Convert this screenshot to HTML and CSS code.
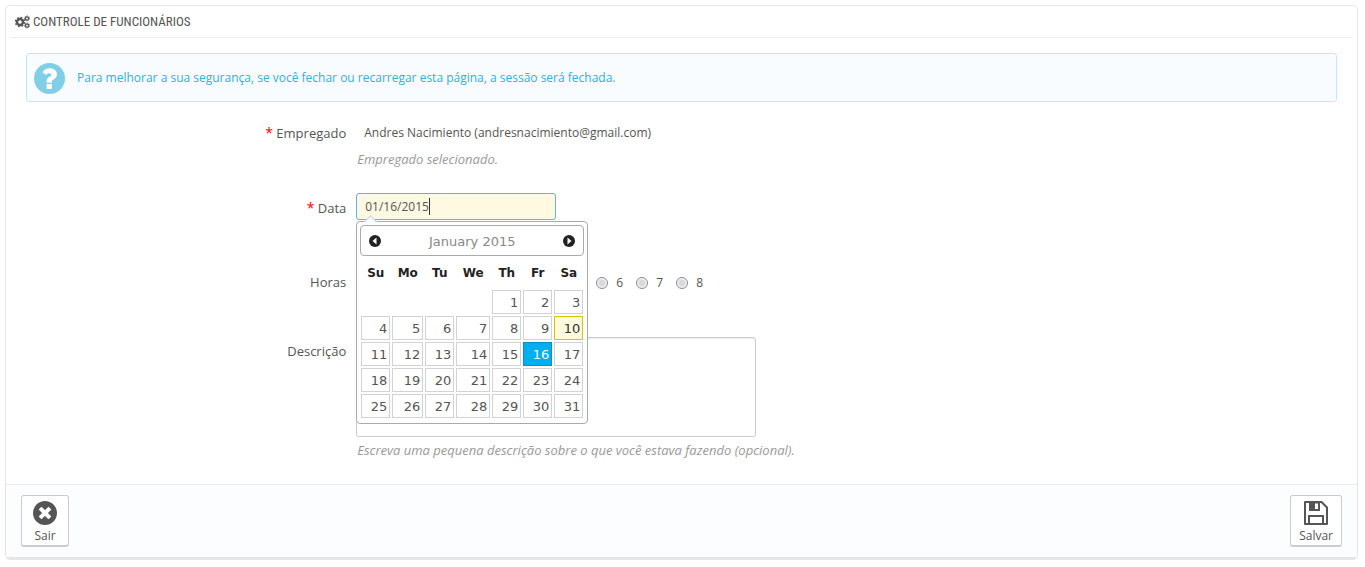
FILE: index.html
```html
<!DOCTYPE html>
<html lang="pt-BR">
<head>
<meta charset="utf-8">
<title>Controle de funcionários</title>
<link rel="stylesheet" href="styles.css">
</head>
<body>
<form class="panel">
  <h1 class="panel-heading">
    <svg class="cogs" viewBox="0 0 15 14" aria-hidden="true">
      <g fill="none" stroke="#555">
        <circle cx="5" cy="7" r="3" stroke-width="2.4"/>
        <circle cx="5" cy="7" r="4.6" stroke-width="1.4" stroke-dasharray="1.8 1.813"/>
        <circle cx="12" cy="3.4" r="1.6" stroke-width="1.3"/>
        <circle cx="12" cy="3.4" r="2.5" stroke-width="1" stroke-dasharray="1.1 1.144"/>
        <circle cx="12" cy="10.6" r="1.6" stroke-width="1.3"/>
        <circle cx="12" cy="10.6" r="2.5" stroke-width="1" stroke-dasharray="1.1 1.144"/>
      </g>
    </svg>
    <span>CONTROLE DE FUNCIONÁRIOS</span>
  </h1>

  <div class="alert">
    <svg class="alert-icon" viewBox="0 0 32 32" aria-hidden="true">
      <circle cx="16" cy="16" r="16" fill="#81cfe6"/>
      <path fill="#fff" d="M13 20.500h5.500v-1.200c0-1 .5-1.500 1.700-2.300 1.900-1.200 3.500-2.600 3.500-5.200 0-4-3.500-6.300-7.500-6.300-3.400 0-5.600 1.300-7.400 4l3.700 2.900c1-1.300 1.900-1.900 3.200-1.900 1.200 0 2.200.6 2.200 1.600 0 1-.8 1.500-2 2.200-1.600 1-2.900 2.300-2.900 4.600zM13 21.800h5.500v5H13z"/>
    </svg>
    <span>Para melhorar a sua segurança, se você fechar ou recarregar esta página, a sessão será fechada.</span>
  </div>

  <div class="form-body">
    <div class="row row-employee">
      <span class="label"><span class="required">*</span> Empregado</span>
      <div class="field">
        <p class="static">Andres Nacimiento (andresnacimiento@gmail.com)</p>
        <p class="help">Empregado selecionado.</p>
      </div>
    </div>

    <div class="row row-date">
      <label class="label" for="date"><span class="required">*</span> Data</label>
      <div class="field">
        <div class="date-box">
          <input class="date-input" id="date" type="text" value="01/16/2015">
        </div>
        <div class="datepicker">
          <div class="picker-header">
            <button class="picker-nav" type="button" aria-label="Prev">
              <svg viewBox="0 0 12 12"><circle cx="6" cy="6" r="6" fill="#222"/><path d="M7.500 2.500v7L3.500 6z" fill="#fff"/></svg>
            </button>
            <span>January 2015</span>
            <button class="picker-nav" type="button" aria-label="Next">
              <svg viewBox="0 0 12 12"><circle cx="6" cy="6" r="6" fill="#222"/><path d="M4.500 2.500v7L8.500 6z" fill="#fff"/></svg>
            </button>
          </div>
          <table class="calendar">
            <colgroup><col class="day-col"><col class="mon-col"><col class="day-col"><col class="wed-col"><col class="day-col"><col class="day-col"><col class="day-col"></colgroup>
            <thead>
              <tr><th>Su</th><th>Mo</th><th>Tu</th><th>We</th><th>Th</th><th>Fr</th><th>Sa</th></tr>
            </thead>
            <tbody>
              <tr><td></td><td></td><td></td><td></td><td><a href="#">1</a></td><td><a href="#">2</a></td><td><a href="#">3</a></td></tr>
              <tr><td><a href="#">4</a></td><td><a href="#">5</a></td><td><a href="#">6</a></td><td><a href="#">7</a></td><td><a href="#">8</a></td><td><a href="#">9</a></td><td><a class="today" href="#">10</a></td></tr>
              <tr><td><a href="#">11</a></td><td><a href="#">12</a></td><td><a href="#">13</a></td><td><a href="#">14</a></td><td><a href="#">15</a></td><td><a class="selected" href="#">16</a></td><td><a href="#">17</a></td></tr>
              <tr><td><a href="#">18</a></td><td><a href="#">19</a></td><td><a href="#">20</a></td><td><a href="#">21</a></td><td><a href="#">22</a></td><td><a href="#">23</a></td><td><a href="#">24</a></td></tr>
              <tr><td><a href="#">25</a></td><td><a href="#">26</a></td><td><a href="#">27</a></td><td><a href="#">28</a></td><td><a href="#">29</a></td><td><a href="#">30</a></td><td><a href="#">31</a></td></tr>
            </tbody>
          </table>
        </div>
      </div>
    </div>

    <div class="row row-hours">
      <span class="label" id="hours-label">Horas</span>
      <div class="field hours" role="radiogroup" aria-labelledby="hours-label">
        <label class="hour"><input type="radio" name="hours">6</label>
        <label class="hour"><input type="radio" name="hours">7</label>
        <label class="hour"><input type="radio" name="hours">8</label>
      </div>
    </div>

    <div class="row row-description">
      <label class="label" for="description">Descrição</label>
      <div class="field">
        <textarea class="description" id="description"></textarea>
        <p class="help">Escreva uma pequena descrição sobre o que você estava fazendo (opcional).</p>
      </div>
    </div>
  </div>

  <div class="panel-footer">
    <button class="action" type="button">
      <svg viewBox="0 0 24 24" aria-hidden="true"><circle cx="12" cy="12" r="12" fill="#555"/><path d="M8.500 8.500l7 7M15.500 8.500l-7 7" stroke="#fff" stroke-width="4"  stroke-linecap="square"/></svg>
      <span>Sair</span>
    </button>
    <button class="action" type="submit">
      <svg viewBox="0 0 24 24" aria-hidden="true"><path d="M1 1h16.500L23 6.500V23H1z" fill="none" stroke="#555" stroke-width="2" stroke-linejoin="round"/><path d="M5 1h11v9H5zM11 2.500v5.500h3v-5.500z" fill="#555" fill-rule="evenodd"/><path d="M5 23v-8h14v8" fill="none" stroke="#555" stroke-width="2"/></svg>
      <span>Salvar</span>
    </button>
  </div>
</form>
</body>
</html>
```
FILE: styles.css
```css
* {
  box-sizing: border-box;
}

body {
  margin: 5px 7px 5px 5px;
  background: #fff;
  color: #555;
  font: 12px/17px "Open Sans", sans-serif;
}

p {
  margin: 0;
}

.panel {
  border: 1px solid #e6e6e6;
  border-bottom-width: 3px;
  border-radius: 5px;
  background: #fff;
}

.panel-heading {
  display: flex;
  align-items: center;
  gap: 3px;
  height: 32px;
  margin: 0 4px 15px;
  padding-left: 5px;
  border-bottom: 1px solid #eee;
  font: 13px/31px "Ubuntu Condensed", "Roboto Condensed", "Liberation Sans Narrow", sans-serif;
}

.cogs {
  width: 15px;
  height: 14px;
}

.alert {
  display: flex;
  align-items: center;
  gap: 12px;
  min-height: 49px;
  margin: 0 20px 22px;
  padding: 4px 7px;
  border: 1px solid #c5e9f3;
  border-radius: 3px;
  background: #f8fcfe;
  color: #31b0d5;
}

.alert-icon {
  width: 31px;
  height: 31px;
  margin-top: 2px;
}

.form-body {
  margin: 0 15px;
}

.row {
  display: flex;
}

.label {
  flex: 0 0 25%;
  padding: 0 5px;
  font-size: 13px;
  line-height: 18px;
  text-align: right;
}

.required {
  color: #f00;
  font-size: 14px;
}

.field {
  position: relative;
  flex: 1;
  padding: 0 5px;
}

.row-employee {
  margin-bottom: 25px;
}

.static {
  padding: 0 8px;
  line-height: 18px;
}

.help {
  margin-top: 9px;
  padding-left: 1px;
  color: #999;
  font-size: 13px;
  font-style: italic;
}

.row-date {
  align-items: center;
  margin-bottom: 53px;
}

.row-date .label {
  padding-top: 2px;
}

.date-box {
  position: relative;
  width: 200px;
}

.date-box::after {
  content: "";
  position: absolute;
  top: 5px;
  left: 73px;
  width: 1px;
  height: 17px;
  background: #333;
}

.date-input {
  display: block;
  width: 100%;
  height: 27px;
  padding: 0 8px;
  border: 1px solid #66afe9;
  border-radius: 3px;
  outline: none;
  background: #fff9e1;
  color: #555;
  caret-color: transparent;
  font: 12px "Open Sans", sans-serif;
}

.datepicker {
  position: absolute;
  z-index: 1;
  top: 100%;
  left: 5px;
  width: 232px;
  margin-top: 1px;
  padding: 3px;
  border: 1px solid #aaa;
  border-radius: 4px;
  background: #fff;
  color: #222;
  font: 13px/17px "DejaVu Sans", sans-serif;
}

.datepicker::before {
  content: "";
  position: absolute;
  top: -5px;
  left: 9px;
  width: 8px;
  height: 8px;
  border: solid #ccc;
  border-width: 1px 0 0 1px;
  background: #fff;
  transform: rotate(45deg);
}

.picker-header {
  position: relative;
  display: flex;
  align-items: center;
  justify-content: space-between;
  height: 31px;
  padding: 0 8px;
  border: 1px solid #aaa;
  border-radius: 4px;
  background: #fff;
  color: #888;
}

.picker-header span {
  padding-top: 2px;
}

.picker-nav {
  width: 12px;
  height: 12px;
  padding: 0;
  border: 0;
  background: none;
}

.picker-nav svg {
  display: block;
}

.calendar {
  width: 224px;
  margin-bottom: 1px;
  border-collapse: collapse;
  table-layout: fixed;
}

.day-col {
  width: 31px;
}

.mon-col {
  width: 33px;
}

.wed-col {
  width: 36px;
}

.calendar th {
  height: 33px;
  padding: 1px 0 0;
  font-size: 12px;
}

.calendar td {
  height: 26px;
  padding: 1px;
}

.calendar a {
  display: block;
  padding: 3px 2px 2px;
  border: 1px solid #d3d3d3;
  background: #fff;
  color: #555;
  text-align: right;
  text-decoration: none;
}

.calendar .today {
  border-color: #d8c400;
  background: #fff9dd;
  color: #333;
}

.calendar .selected {
  border-color: #0090cd;
  background: #00aff0;
  color: #fff;
}

.row-hours {
  align-items: center;
  margin-bottom: 46px;
}

.hours {
  display: flex;
  padding-left: 245px;
}

.hour {
  display: flex;
  flex: 0 0 40px;
  align-items: center;
  gap: 8px;
}

.hour input {
  width: 12px;
  height: 12px;
  margin: 2px 0 0;
  border: 1px solid #888;
  border-radius: 50%;
  appearance: none;
  background: radial-gradient(circle, #d5d9dc 0 35%, #fff 75%);
}

.description {
  display: block;
  width: 400px;
  height: 100px;
  border: 1px solid #ccc;
  border-radius: 3px;
  box-shadow: inset 0 1px 1px #eee;
  background: #fff;
  resize: none;
}

.description + .help {
  margin-top: 5px;
}

.row-description {
  margin-bottom: 25px;
}

.row-description .label {
  padding-top: 5px;
}

.panel-footer {
  display: flex;
  justify-content: space-between;
  padding: 10px 15px;
  border-top: 1px solid #eee;
  background: #fcfdfe;
}

.action {
  display: flex;
  flex-direction: column;
  align-items: center;
  height: 52px;
  padding: 5px 8px 0;
  border: 1px solid #ccc;
  border-bottom: 2px solid #ccc;
  border-radius: 3px;
  background: #fff;
  color: #555;
  font: 12px/17px "Open Sans", sans-serif;
}

.action:first-child {
  padding: 5px 11px 0;
}

.action svg {
  width: 24px;
  height: 24px;
  margin-bottom: 2px;
}
```
